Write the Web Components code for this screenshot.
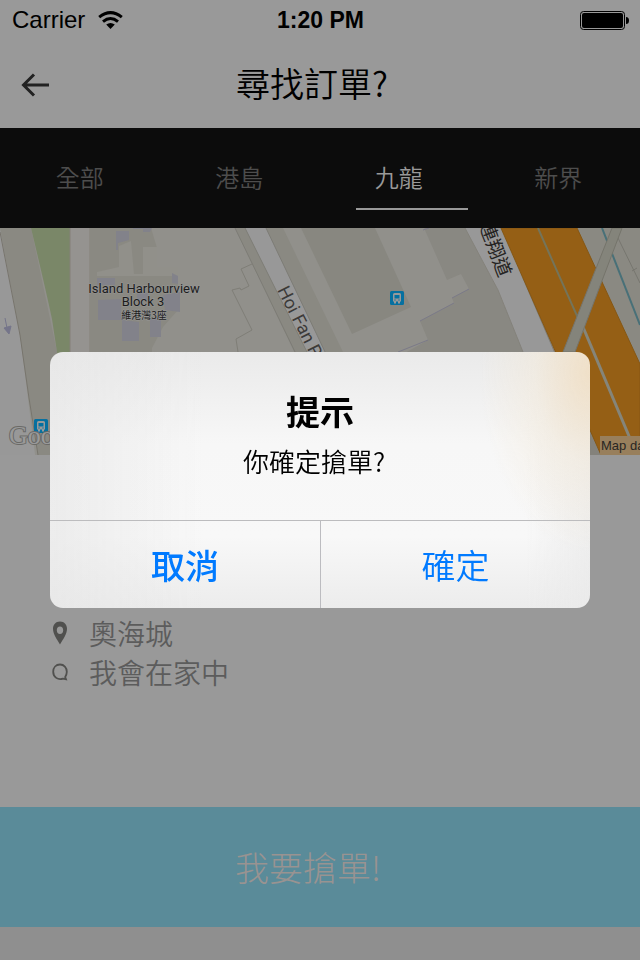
<!DOCTYPE html>
<html lang="zh-Hant">
<head>
<meta charset="utf-8">
<meta name="viewport" content="width=device-width, initial-scale=1">
<title>尋找訂單</title>
<style>
html, body { margin: 0; min-height: 100%; background: #999; }
body { font-family: "Liberation Sans", "Noto Sans CJK TC", sans-serif; color: #000; }
</style>
</head>
<body>
<order-page></order-page>
<script>
const define = (name, html, setup) => customElements.define(name, class extends HTMLElement {
  constructor() {
    super();
    const t = document.createElement('template');
    t.innerHTML = html;
    this.attachShadow({ mode: 'open' }).append(t.content.cloneNode(true));
  }
  connectedCallback() { if (setup) setup(this, this.shadowRoot); }
});

define('status-bar', `
<style>
:host { display: grid; grid-template-columns: 1fr auto 1fr; align-items: center; height: 40px; padding: 0 11px 0 12px; font-size: 24px; line-height: 40px; }
.left { display: flex; align-items: center; gap: 13px; }
.time { font-weight: 700; font-size: 23px; }
.battery { justify-self: end; }
svg { display: block; }
</style>
<div class="left"><span>Carrier</span>
<svg width="25" height="18" viewBox="0 0 25 18" aria-label="Wi-Fi"><g fill="none" stroke="#000" stroke-width="3"><path d="M1.2 6.2Q12.5-3 23.8 6.2"/><path d="M5 10.6Q12.5 4.4 20 10.6"/></g><path d="M8.2 13.6Q12.5 10.400 16.800 13.600L12.500 18Z"/></svg></div>
<span class="time">1:20 PM</span>
<svg class="battery" width="49" height="19" viewBox="0 0 49 19" aria-label="Battery"><rect x=".5" y=".5" width="44" height="18" rx="3" fill="none" stroke="#000"/><rect x="2" y="2" width="41" height="15" rx="2"/><path d="M46 6q3 0 3 3.500t-3 3.500z"/></svg>`);

define('nav-bar', `
<style>
:host { display: grid; grid-template-columns: 72px 1fr 72px; align-items: center; height: 88px; }
button { border: 0; background: none; padding: 2px 0 0 21px; height: 88px; display: flex; align-items: center; }
h1 { margin: 0; padding-right: 16px; font-size: 34px; font-weight: 350; line-height: 86px; height: 88px; text-align: center; font-family: "Noto Sans CJK TC", sans-serif; }
</style>
<button aria-label="返回"><svg width="28" height="24" viewBox="0 0 28 24" fill="none" stroke="#222" stroke-width="3"><path d="M13 1.500L2.500 12L13 22.500M2 12H28"/></svg></button>
<h1><slot></slot></h1>`);

define('area-tab', `
<style>
:host { display: block; }
button { width: 100%; height: 100px; padding: 0; border: 0; background: none; display: grid; grid-template-rows: 80px 2px; font: 350 24px/98px "Noto Sans CJK TC", sans-serif; color: #4d4d4d; }
i { width: 112px; justify-self: center; margin-left: 26px; }
:host([selected]) button { color: #999; }
:host([selected]) i { background: #999; }
span { line-height: 98px; }
</style>
<button role="tab"><span><slot></slot></span><i></i></button>`,
(el, root) => root.querySelector('button').setAttribute('aria-selected', el.hasAttribute('selected')));

define('area-tabs', `
<style>:host { display: grid; grid-template-columns: repeat(4, 1fr); height: 100px; padding-right: 2px; background: #0c0c0c; }</style>
<slot></slot>`);

define('order-map', `
<style>
:host { display: block; height: 227px; background: #91908b; overflow: hidden; }
svg { display: block; width: 100%; height: 100%; }
</style>
<svg viewBox="0 0 640 227" preserveAspectRatio="xMidYMid slice" role="img" aria-label="地圖">
<defs><g id="bus"><rect width="14" height="14" rx="1.500" fill="#0670a0"/><path d="M3 3.500q0-1.500 1.500-1.500h5q1.500 0 1.500 1.500v7h-1v2h-2V10.500H6v2H4v-2H3z" fill="#999"/><path d="M4.500 4h5v3.500h-5z" fill="#0670a0"/><circle cx="5" cy="9" r=".7" fill="#0670a0"/><circle cx="9" cy="9" r=".7" fill="#0670a0"/></g></defs>
<rect width="640" height="227" fill="#91908b"/>
<path d="M0 0L20 107L35 227H0Z" fill="#989898"/>
<path d="M0 0H31L44 62L57 124L70 227H38L20 107Z" fill="#8a8982"/>
<path d="M0 4L20 107L29 170L38 227" fill="none" stroke="#78756d"/>
<path d="M31 0H70V227H66L57 124L52 91Q45 58 31 0Z" fill="#7a8768"/>
<path d="M70 0H90V227H70Z" fill="#959390"/>
<path d="M70 0V227M90 0V227" stroke="#858078" fill="none"/>
<path d="M90 0H151L157 20V39H178V82L163 99L152 120V127H90Z" fill="#8a8982"/>
<path d="M97 44L119 39V18L131 13L134 46H143V19H157V39H178V48H97Z" fill="#91908a"/>
<g fill="#82828a"><path d="M116 3L129 3V12L118 15V22H116ZM133 0H152L150 4H143V1H133ZM97 50H115V57H97ZM172 45L178 48V56L172 55ZM98 72L121 71V92H98ZM122 92L139 94V113H122ZM150 90H161V109H150ZM163 67L180 64V84L165 82ZM137 65H148V72H137Z"/></g>
<path d="M5 90L7 100M4 100L11 98L9 106Z" fill="#75758a" stroke="#75758a"/>
<path d="M235 0H283L343 124V132H298Z" fill="#8a8982"/>
<path d="M245 0H266L325 124V132H311Z" fill="#989898"/>
<path d="M245 0L309 128M266 0L327 128M235 0L297 128" fill="none" stroke="#7d7c76"/>
<path d="M252 36L241 41L249 58L241 62L240 60L232 62L252 102L236 111L238 124" fill="none" stroke="#7f7e77"/>
<path d="M301 0H375L411 79L352 106Z" fill="#888780"/>
<path d="M424 0H465L498 62L523 124V130H396L428 112L420 93L454 75L452 70L469 61L461 46L447 52Z" fill="#898882"/>
<path d="M398 124L428 112M420 93L454 75M452 70L469 61M423 2L429 0" fill="none" stroke="#7b7a88"/>
<path d="M465 0H500L600 227H570L523 124L498 62Z" fill="#989898"/>
<path d="M465 0L498 62L523 124" fill="none" stroke="#84827b"/>
<path d="M523 50L557 130" stroke="#7f7c75"/>
<path d="M577 0H640V145Z" fill="#8a8982"/>
<path d="M590 200L602 227H590Z" fill="#84827b"/>
<path d="M501 0H577L640 136V227H601Z" fill="#955f15" stroke="#865714"/>
<path d="M538 0Q560 50 578 90" fill="none" stroke="#74745a" stroke-width="2"/>
<path d="M583 99L634 220" fill="none" stroke="#85857a" stroke-width="3"/>
<path d="M602 0L640 97" stroke="#487078" stroke-width="2"/>
<path d="M618 10L640 55M632 43L637 40" stroke="#77766f"/>
<path d="M612 0H622L575 124H563Z" fill="#84847b" stroke="#75746b"/>
<g font-family="Roboto, sans-serif" font-size="13" fill="#1c1c1c" stroke="#979797" stroke-width="1" paint-order="stroke" text-anchor="middle"><text x="144" y="65">Island Harbourview</text><text x="143" y="78">Block 3</text><text x="144" y="91" font-family="Noto Sans CJK TC, sans-serif" font-size="10">維港灣3座</text></g>
<text transform="translate(277 62) rotate(63)" font-family="Roboto, sans-serif" font-size="18" fill="#3c3a38">Hoi Fan Rd</text>
<text transform="translate(479 -3) rotate(69)" font-family="Noto Sans CJK TC, sans-serif" font-size="19" fill="#252321">連翔道</text>
<use href="#bus" x="34" y="191"/><use href="#bus" x="390" y="63"/>
<text x="9" y="216" font-family="Liberation Serif, serif" font-size="26" fill="#999" stroke="#6a6a67" stroke-width="2" paint-order="stroke">Google</text>
<rect x="600" y="208" width="40" height="19" fill="#987f5c"/>
<text x="601" y="222" font-family="Liberation Sans, sans-serif" font-size="13" fill="#282623">Map da</text>
</svg>`);

define('detail-row', `
<style>
:host { display: flex; align-items: center; height: 39px; font: 350 28px/38px "Noto Sans CJK TC", sans-serif; color: #5c5c5c; }
.icon { width: 38px; display: flex; }
</style>
<span class="icon"><slot name="icon"></slot></span><span><slot></slot></span>`);

define('grab-button', `
<style>
:host { display: block; }
button { display: block; width: 100%; height: 120px; border: 0; padding: 0 24px 0 0; background: #5a8b99; color: #999391; font: 300 34px/118px "Noto Sans CJK TC", sans-serif; }
</style>
<button><slot></slot></button>`);

define('alert-dialog', `
<style>
:host { position: fixed; inset: 0; display: grid; place-items: center; }
section { width: 84.4%; box-sizing: border-box; border-radius: 13px; overflow: hidden;
  background: radial-gradient(ellipse 110px 180px at 100% 8%, #f0e0c8, #f3e9d880 50%, #f6f2ea00),
   linear-gradient(90deg, #e6e6e6aa, #f7f7f700 28%, #f7f7f700 88%, #e9e9e9aa),
   linear-gradient(#eaeaea, #f7f7f7 36%, #f8f8f8 72%, #ececec); }
.text { height: 168px; box-sizing: border-box; padding-top: 35px; text-align: center; font-family: "Noto Sans CJK TC", sans-serif; }
h2 { margin: 0; font-size: 34px; line-height: 48px; font-weight: 700; }
p { margin: 8px 0 0; padding-right: 12px; font-size: 26px; line-height: 36px; font-weight: 350; }
.actions { display: grid; grid-template-columns: 1fr 1fr; border-top: 1px solid #bcbcbe; }
button { height: 87px; border: 0; padding: 0; background: none; color: #007aff; font: 350 34px/86px "Noto Sans CJK TC", sans-serif; }
button:first-child { font-weight: 500; }
button:last-child { border-left: 1px solid #bcbcc0; }
</style>
<section role="alertdialog" aria-modal="true" aria-labelledby="t" aria-describedby="m">
<div class="text"><h2 id="t"><slot name="title"></slot></h2><p id="m"><slot></slot></p></div>
<div class="actions"><button><slot name="cancel"></slot></button><button><slot name="ok"></slot></button></div>
</section>`);

define('order-page', `
<style>
:host { display: flex; flex-direction: column; min-height: 100vh; background: #999; }
.details { flex: 1; display: flex; flex-direction: column; justify-content: flex-end; padding: 0 51px 116px; }
footer { height: 33px; background: #8f8f8f; }
svg { display: block; }
</style>
<status-bar></status-bar>
<nav-bar>尋找訂單?</nav-bar>
<area-tabs role="tablist"><area-tab>全部</area-tab><area-tab>港島</area-tab><area-tab selected>九龍</area-tab><area-tab>新界</area-tab></area-tabs>
<order-map></order-map>
<div class="details">
<detail-row><svg slot="icon" width="18" height="24" viewBox="0 0 18 24"><path fill="#50504e" fill-rule="evenodd" d="M9 .5C4.500.5 2 3.800 2 7.800C2 13 6 18.500 9 23.500C12 18.500 16 13 16 7.800C16 3.800 13.500.5 9 .5ZM9 5.500C11 5.500 12.200 7.200 12.200 9.300S11 13 9 13S5.800 11.400 5.800 9.300S7 5.500 9 5.500Z"/></svg>奧海城</detail-row>
<detail-row><svg slot="icon" width="18" height="18" viewBox="0 0 18 18"><path fill="none" stroke="#50504e" stroke-width="1.800" d="M12 15.600C7 17.500 2.200 14 2.200 8.800C2.200 4.500 5 1.500 9 1.500S15.800 4.500 15.800 8.800C15.800 11 15 12.800 14.200 14L15 16.200Z"/></svg>我會在家中</detail-row>
</div>
<grab-button>我要搶單!</grab-button>
<footer></footer>
<alert-dialog><span slot="title">提示</span>你確定搶單?<span slot="cancel">取消</span><span slot="ok">確定</span></alert-dialog>`);
</script>
</body>
</html>
